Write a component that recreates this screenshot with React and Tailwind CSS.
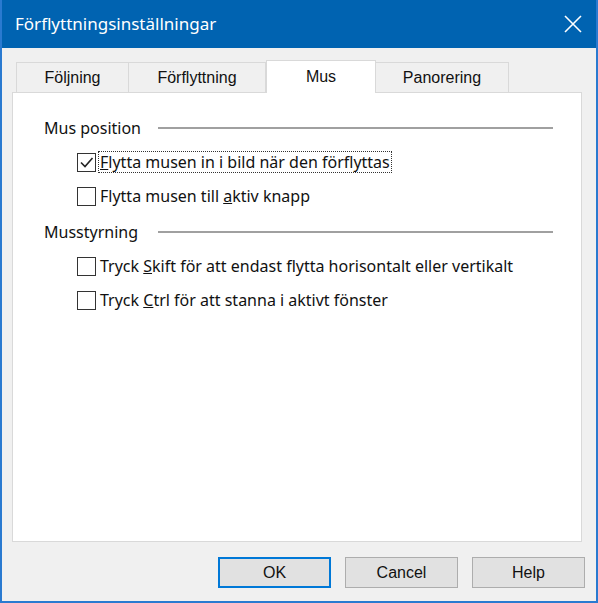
import React, { useState } from 'react';

const tabs = [
  { label: 'Följning', w: 'w-[113px]' },
  { label: 'Förflyttning', w: 'w-[138px]' },
  { label: 'Mus', w: 'w-[110px]' },
  { label: 'Panorering', w: 'w-[134px]' },
];

const Check = ({ checked }) => (
  <span className="w-[19px] h-[19px] border border-[#333] bg-white flex items-center justify-center shrink-0">
    {checked && (
      <svg width="15" height="15" viewBox="0 0 15 15">
        <path d="M2 7.5 L6 11.5 L13.5 3" fill="none" stroke="#222" strokeWidth="1.6" />
      </svg>
    )}
  </span>
);

const Option = ({ checked, focused, children }) => (
  <div className="flex items-center h-[34px] pl-[64px] gap-[2px]">
    <Check checked={checked} />
    <span
      className={`px-[1px] leading-[20px] ${focused ? 'border border-dotted border-[#333]' : 'border border-transparent'}`}
    >
      {children}
    </span>
  </div>
);

const GroupTitle = ({ children, className = '' }) => (
  <div className={`flex items-center h-[34px] pl-[31px] pr-[28px] ${className}`}>
    <span className="w-[114px]">{children}</span>
    <div className="flex-1 h-[2px] bg-[#a0a0a0]" />
  </div>
);

export default function App() {
  const [active, setActive] = useState('Mus');

  return (
    <div className="w-[598px] h-[603px] bg-[#f0f0f0] border-x-2 border-b-2 border-[#2a7ad0] flex flex-col font-['Noto_Sans',sans-serif] text-[#111] text-[16px]">
      {/* title bar */}
      <div className="h-[48px] bg-[#0063b1] flex items-center justify-between pl-[13px] pr-[14px] text-white text-[17px]">
        <span>Förflyttningsinställningar</span>
        <svg width="18" height="18" viewBox="0 0 18 18">
          <path d="M1 1 L17 17 M17 1 L1 17" stroke="white" strokeWidth="1.6" />
        </svg>
      </div>

      <div className="flex-1 flex flex-col px-[10px] pt-[12px]">
        {/* tabs */}
        <div className="flex items-end pl-[4px] h-[32px] font-['Liberation_Sans',sans-serif] text-[16px]">
          {tabs.map((t) =>
            t.label === active ? (
              <div
                key={t.label}
                className={`${t.w} h-[33px] -mb-px bg-white border border-b-0 border-[#d9d9d9] flex items-center justify-center relative z-10`}
              >
                {t.label}
              </div>
            ) : (
              <button
                key={t.label}
                onClick={() => setActive(t.label)}
                className={`${t.w} h-[30px] bg-[#f0f0f0] border border-b-0 border-[#d9d9d9] -ml-px first:ml-0 flex items-center justify-center`}
              >
                {t.label}
              </button>
            )
          )}
        </div>

        {/* panel */}
        <div className="h-[450px] w-[570px] bg-white border border-[#d9d9d9] pt-[18px]">
          <GroupTitle>Mus position</GroupTitle>
          <Option checked focused>
            <u>F</u>lytta musen in i bild när den förflyttas
          </Option>
          <Option>
            Flytta musen till <u>a</u>ktiv knapp
          </Option>
          <GroupTitle className="mt-[2px]">Musstyrning</GroupTitle>
          <Option>
            Tryck <u>S</u>kift för att endast flytta horisontalt eller vertikalt
          </Option>
          <Option>
            Tryck <u>C</u>trl för att stanna i aktivt fönster
          </Option>
        </div>

        {/* buttons */}
        <div className="flex justify-end gap-[14px] pr-[1px] mt-[15px] font-['Liberation_Sans',sans-serif] text-[16px]">
          <button className="w-[113px] h-[31px] bg-[#e1e1e1] border-2 border-[#0078d7]">OK</button>
          <button className="w-[113px] h-[31px] bg-[#e1e1e1] border border-[#adadad]">Cancel</button>
          <button className="w-[113px] h-[31px] bg-[#e1e1e1] border border-[#adadad]">Help</button>
        </div>
      </div>
    </div>
  );
}
